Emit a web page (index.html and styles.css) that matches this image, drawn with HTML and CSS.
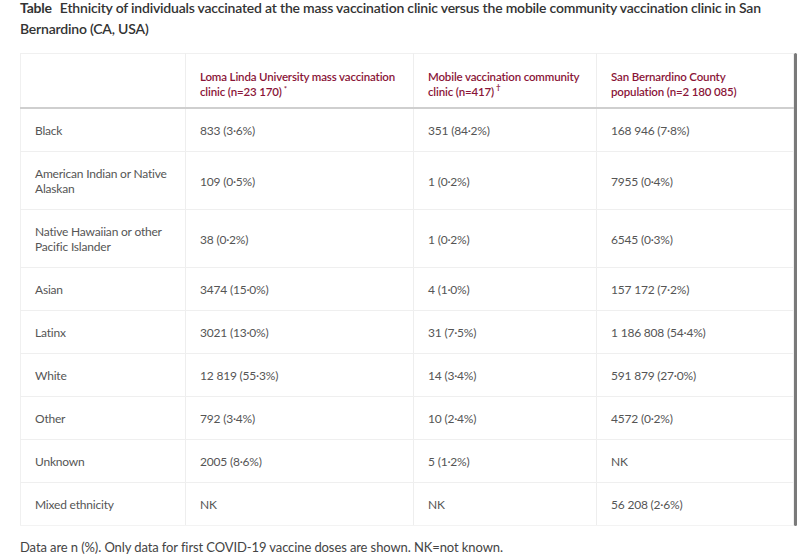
FILE: index.html
```html
<!DOCTYPE html>
<html lang="en">
<head>
<meta charset="utf-8">
<title>Table</title>
<link rel="stylesheet" href="styles.css">
</head>
<body>
<div class="page">
  <h2 class="caption"><span class="label">Table</span>Ethnicity of individuals vaccinated at the mass vaccination clinic versus the mobile community vaccination clinic in San Bernardino (CA, USA)</h2>
  <div class="frame">
    <table class="data">
      <colgroup>
        <col class="c1"><col class="c2"><col class="c3"><col class="c4">
      </colgroup>
      <thead>
        <tr>
          <th></th>
          <th>Loma Linda University mass vaccination clinic (n=23 170)<sup>*</sup></th>
          <th>Mobile vaccination community clinic (n=417)<sup class="dag">†</sup></th>
          <th class="last">San Bernardino County population (n=2 180 085)</th>
        </tr>
      </thead>
      <tbody>
        <tr><td>Black</td><td>833 (3·6%)</td><td>351 (84·2%)</td><td>168 946 (7·8%)</td></tr>
        <tr><td>American Indian or Native Alaskan</td><td>109 (0·5%)</td><td>1 (0·2%)</td><td>7955 (0·4%)</td></tr>
        <tr><td>Native Hawaiian or other Pacific Islander</td><td>38 (0·2%)</td><td>1 (0·2%)</td><td>6545 (0·3%)</td></tr>
        <tr><td>Asian</td><td>3474 (15·0%)</td><td>4 (1·0%)</td><td>157 172 (7·2%)</td></tr>
        <tr><td>Latinx</td><td>3021 (13·0%)</td><td>31 (7·5%)</td><td>1 186 808 (54·4%)</td></tr>
        <tr><td>White</td><td>12 819 (55·3%)</td><td>14 (3·4%)</td><td>591 879 (27·0%)</td></tr>
        <tr><td>Other</td><td>792 (3·4%)</td><td>10 (2·4%)</td><td>4572 (0·2%)</td></tr>
        <tr><td>Unknown</td><td>2005 (8·6%)</td><td>5 (1·2%)</td><td>NK</td></tr>
        <tr><td>Mixed ethnicity</td><td>NK</td><td>NK</td><td>56 208 (2·6%)</td></tr>
      </tbody>
    </table>
    <div class="scrollbar"></div>
  </div>
  <p class="note">Data are n (%). Only data for first COVID-19 vaccine doses are shown. NK=not known.</p>
</div>
</body>
</html>
```

FILE: styles.css
```css
html, body {
  margin: 0;
  padding: 0;
  background: #ffffff;
}

.page {
  padding: 0 3px 0 20px;
  font-family: "Lato", "Liberation Sans", sans-serif;
  color: #444;
}

.caption {
  margin: -3px 0 0 0;
  font-size: 14px;
  line-height: 21px;
  font-weight: 600;
  letter-spacing: -0.2px;
  color: #333;
}

.caption .label {
  font-weight: 700;
  margin-right: 8px;
}

.frame {
  display: flex;
  margin-top: 14px;
}

.data {
  border-collapse: collapse;
  table-layout: fixed;
  width: 773px;
  border: 1px solid #f0f0f0;
}

.c1 { width: 165px; }
.c2 { width: 228px; }
.c3 { width: 183px; }
.c4 { width: 197px; }

.data th,
.data td {
  text-align: left;
  vertical-align: middle;
  padding: 14px 10px 13px 14px;
  border-left: 1px solid #eeeeee;
}

.data th:first-child,
.data td:first-child {
  border-left: none;
}

.data th {
  font-size: 11.5px;
  line-height: 15px;
  font-weight: 600;
  letter-spacing: -0.15px;
  color: #8a1538;
  padding: 15px 10px 8px 14px;
  border-bottom: 2px solid #cfcfcf;
}

.data th.last {
  padding-right: 40px;
}

.data td {
  font-size: 12px;
  line-height: 15px;
  letter-spacing: -0.2px;
  color: #555;
  border-bottom: 1px solid #efefef;
}

.data tbody tr:last-child td {
  border-bottom: 1px solid #f3f3f3;
}

.data sup {
  font-size: 8px;
  line-height: 0;
  letter-spacing: 0;
  vertical-align: 4px;
  margin-left: 2px;
}

.data sup.dag {
  vertical-align: 6px;
}

.scrollbar {
  width: 4px;
  background: #7a7a7a;
  border-radius: 2px;
}

.note {
  margin: 12px 0 0 0;
  font-size: 13px;
  line-height: 18px;
  letter-spacing: -0.1px;
  color: #444;
}
```
